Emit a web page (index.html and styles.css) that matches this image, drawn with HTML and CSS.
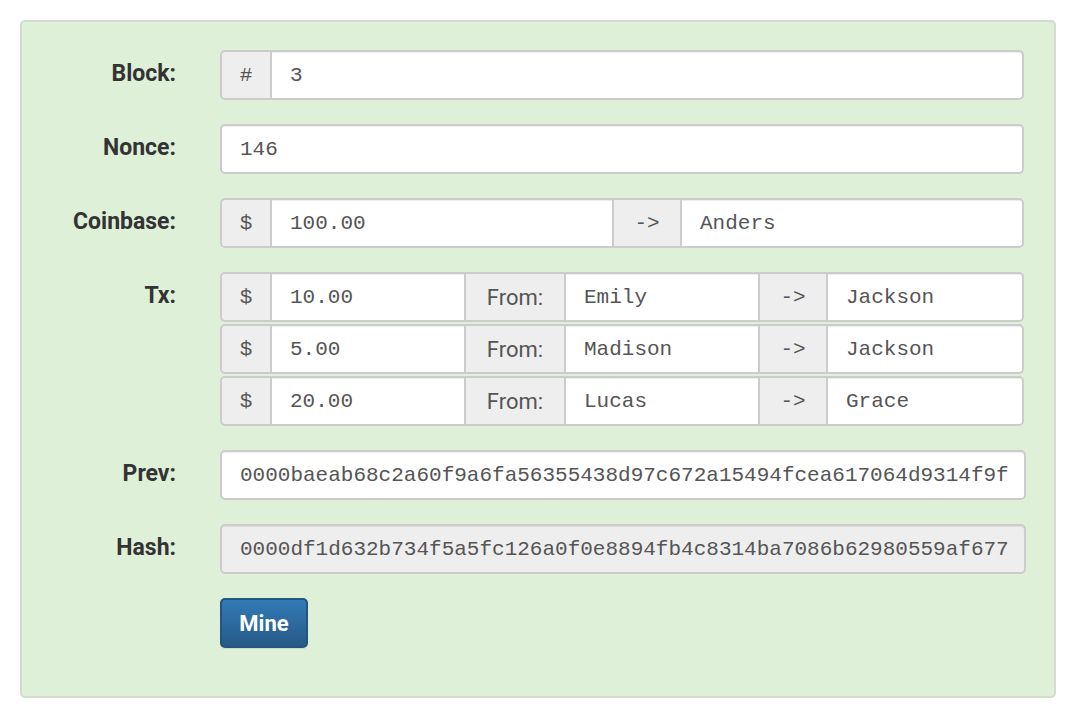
FILE: index.html
```html
<!DOCTYPE html>
<html>
<head>
<meta charset="utf-8">
<link rel="stylesheet" href="styles.css">
</head>
<body>
<div class="well">
  <form class="form">
    <label class="lbl">Block:</label>
    <div class="group">
      <span class="addon addon-sm">#</span>
      <span class="field grow">3</span>
    </div>

    <label class="lbl">Nonce:</label>
    <div class="group">
      <span class="field grow">146</span>
    </div>

    <label class="lbl">Coinbase:</label>
    <div class="group">
      <span class="addon addon-sm">$</span>
      <span class="field w-cb">100.00</span>
      <span class="addon addon-arrow">-&gt;</span>
      <span class="field grow">Anders</span>
    </div>

    <label class="lbl">Tx:</label>
    <div class="tx-list">
      <div class="group">
        <span class="addon addon-sm">$</span>
        <span class="field w-amt">10.00</span>
        <span class="addon addon-from">From:</span>
        <span class="field w-name">Emily</span>
        <span class="addon addon-arrow">-&gt;</span>
        <span class="field grow">Jackson</span>
      </div>
      <div class="group">
        <span class="addon addon-sm">$</span>
        <span class="field w-amt">5.00</span>
        <span class="addon addon-from">From:</span>
        <span class="field w-name">Madison</span>
        <span class="addon addon-arrow">-&gt;</span>
        <span class="field grow">Jackson</span>
      </div>
      <div class="group">
        <span class="addon addon-sm">$</span>
        <span class="field w-amt">20.00</span>
        <span class="addon addon-from">From:</span>
        <span class="field w-name">Lucas</span>
        <span class="addon addon-arrow">-&gt;</span>
        <span class="field grow">Grace</span>
      </div>
    </div>

    <label class="lbl">Prev:</label>
    <div class="group wide">
      <span class="field grow">0000baeab68c2a60f9a6fa56355438d97c672a15494fcea617064d9314f9f</span>
    </div>

    <label class="lbl">Hash:</label>
    <div class="group wide">
      <span class="field grow readonly">0000df1d632b734f5a5fc126a0f0e8894fb4c8314ba7086b62980559af677</span>
    </div>

    <span></span>
    <div class="actions">
      <button type="button" class="btn">Mine</button>
    </div>
  </form>
</div>
</body>
</html>
```

FILE: styles.css
```css
html, body {
  margin: 0;
  padding: 0;
  background: #ffffff;
}

body {
  padding: 20px 30px 20px 20px;
  font-family: Roboto, "Liberation Sans", sans-serif;
}

.well {
  background: #dff0d8;
  border: 2px solid #d3dccf;
  border-radius: 5px;
  padding: 28px 28px 48px 0;
  height: 678px;
  box-sizing: border-box;
}

.form {
  display: grid;
  grid-template-columns: 154px minmax(0, 1fr);
  column-gap: 44px;
  row-gap: 24px;
}

.lbl {
  text-align: right;
  font-family: Roboto, "Liberation Sans", sans-serif;
  font-weight: 700;
  font-size: 23px;
  color: #333333;
  line-height: 28px;
  padding-top: 10px;
}

.group {
  display: flex;
  height: 50px;
  margin-right: 2px;
  min-width: 0;
}

.group.wide {
  margin-right: 0;
}

.tx-list {
  display: flex;
  flex-direction: column;
  gap: 2px;
  margin-right: 2px;
}

.tx-list .group {
  margin-right: 0;
}

.addon, .field {
  box-sizing: border-box;
  height: 50px;
  border: 2px solid #cccccc;
  display: flex;
  align-items: center;
  font-size: 21px;
  color: #555555;
}

.addon {
  background: #eeeeee;
  justify-content: center;
  font-family: Roboto, "Liberation Sans", sans-serif;
  font-size: 22px;
  flex: none;
}

.addon + .field, .field + .addon {
  margin-left: -2px;
}

.field {
  background: #ffffff;
  font-family: "Liberation Mono", "Courier New", monospace;
  padding: 0 12px 0 18px;
  box-shadow: inset 0 1px 1px rgba(0, 0, 0, 0.075);
  white-space: nowrap;
  overflow: hidden;
}

.group > :first-child {
  border-top-left-radius: 5px;
  border-bottom-left-radius: 5px;
}

.group > :last-child {
  border-top-right-radius: 5px;
  border-bottom-right-radius: 5px;
}

.addon-sm { width: 52px; font-family: "Liberation Mono", monospace; font-size: 21px; }
.addon-arrow { width: 70px; font-family: "Liberation Mono", monospace; font-size: 21px; }
.addon-from { width: 102px; }

.w-cb { width: 344px; flex: none; }
.w-amt { width: 196px; flex: none; }
.w-name { width: 196px; flex: none; }

.grow { flex: 1; min-width: 0; }

.readonly {
  background: #eeeeee;
}

.actions {
  display: flex;
}

.btn {
  width: 88px;
  height: 50px;
  border: 2px solid #245580;
  border-radius: 5px;
  background: linear-gradient(to bottom, #337ab7 0%, #265a88 100%);
  color: #ffffff;
  font-family: Roboto, "Liberation Sans", sans-serif;
  font-weight: 700;
  font-size: 22px;
  padding: 0;
  box-shadow: 0 1px 1px rgba(0, 0, 0, 0.1);
}
```
